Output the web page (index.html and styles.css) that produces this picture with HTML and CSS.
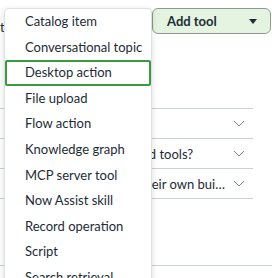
FILE: index.html
```html
<!DOCTYPE html>
<html lang="en">
<head>
    <meta charset="UTF-8">
    <meta name="viewport" content="width=device-width, initial-scale=1.0">
    <title>Add tool</title>
    <link rel="stylesheet" href="styles.css">
</head>
<body>
    <div class="page">
        <div class="toolbar">
            <span class="title">tools for this agent</span>
            <button class="add-btn">Add tool <span class="caret"></span></button>
        </div>

        <div class="faq">
            <div class="faq-row">
                <span class="faq-q">What is a tool?</span>
                <svg class="chev" width="12" height="7" viewBox="0 0 12 7"><path d="M1 1l5 5 5-5" fill="none" stroke="#7b8790" stroke-width="1"/></svg>
            </div>
            <div class="faq-row">
                <span class="faq-q">Which are the supported tools?</span>
                <svg class="chev" width="12" height="7" viewBox="0 0 12 7"><path d="M1 1l5 5 5-5" fill="none" stroke="#7b8790" stroke-width="1"/></svg>
            </div>
            <div class="faq-row">
                <span class="faq-q last">Can users bring along their own built tools?</span>
                <svg class="chev" width="12" height="7" viewBox="0 0 12 7"><path d="M1 1l5 5 5-5" fill="none" stroke="#7b8790" stroke-width="1"/></svg>
            </div>
        </div>

        <div class="divider"></div>
    </div>

    <ul class="menu">
        <li>Catalog item</li>
        <li>Conversational topic</li>
        <li class="focused">Desktop action</li>
        <li>File upload</li>
        <li>Flow action</li>
        <li>Knowledge graph</li>
        <li>MCP server tool</li>
        <li>Now Assist skill</li>
        <li>Record operation</li>
        <li>Script</li>
        <li>Search retrieval</li>
        <li>Web search</li>
    </ul>
</body>
</html>
```

FILE: styles.css
```css
body {
    margin: 0;
    padding: 0;
    font-family: Lato, "Noto Sans", sans-serif;
    color: #1d2b36;
    background-color: #fff;
    overflow: hidden;
    position: relative;
    height: 278px;
}

.page {
    padding-top: 8px;
}

.toolbar {
    display: flex;
    align-items: center;
    height: 26px;
}

.title {
    font-size: 13px;
    padding-top: 12px;
    white-space: nowrap;
}

.add-btn {
    margin-left: auto;
    margin-right: 1px;
    width: 119px;
    height: 26px;
    display: flex;
    align-items: center;
    justify-content: space-between;
    padding: 0 13px 0 14px;
    font-family: Lato, sans-serif;
    font-size: 13px;
    font-weight: bold;
    color: #1d2b36;
    background-color: #e4f4e0;
    border: 1px solid #8d9a90;
    border-radius: 6px;
}

.caret {
    width: 0;
    height: 0;
    border-left: 4px solid transparent;
    border-right: 4px solid transparent;
    border-top: 5px solid #1d2b36;
}

.faq {
    margin-top: 74px;
    width: 253px;
}

.faq-row {
    display: flex;
    align-items: center;
    height: 29px;
    border-top: 1px solid #c9d2d6;
    padding-left: 14px;
    padding-right: 8px;
    font-size: 13px;
}

.faq-row:last-child {
    border-bottom: 1px solid #c9d2d6;
}

.faq-q {
    flex: 1;
    min-width: 0;
    white-space: nowrap;
    overflow: hidden;
    text-overflow: ellipsis;
    padding-right: 18px;
}

.faq-q.last {
    padding-right: 8px;
}

.divider {
    margin-top: 66px;
    border-top: 1px solid #c9d2d6;
}

.menu {
    position: absolute;
    left: 4px;
    top: 8px;
    width: 146px;
    margin: 0;
    padding: 0;
    list-style: none;
    background-color: #fff;
    border: 1px solid #dbe0e3;
    border-radius: 4px;
    box-shadow: 0 2px 6px rgba(0, 0, 0, 0.14);
}

.menu li {
    height: 25.6px;
    line-height: 25.6px;
    padding-left: 20px;
    font-size: 13px;
    white-space: nowrap;
    overflow: hidden;
    border-radius: 2px;
}

.menu li.focused {
    box-shadow: inset 0 0 0 2px #3b9a3f;
}
```
